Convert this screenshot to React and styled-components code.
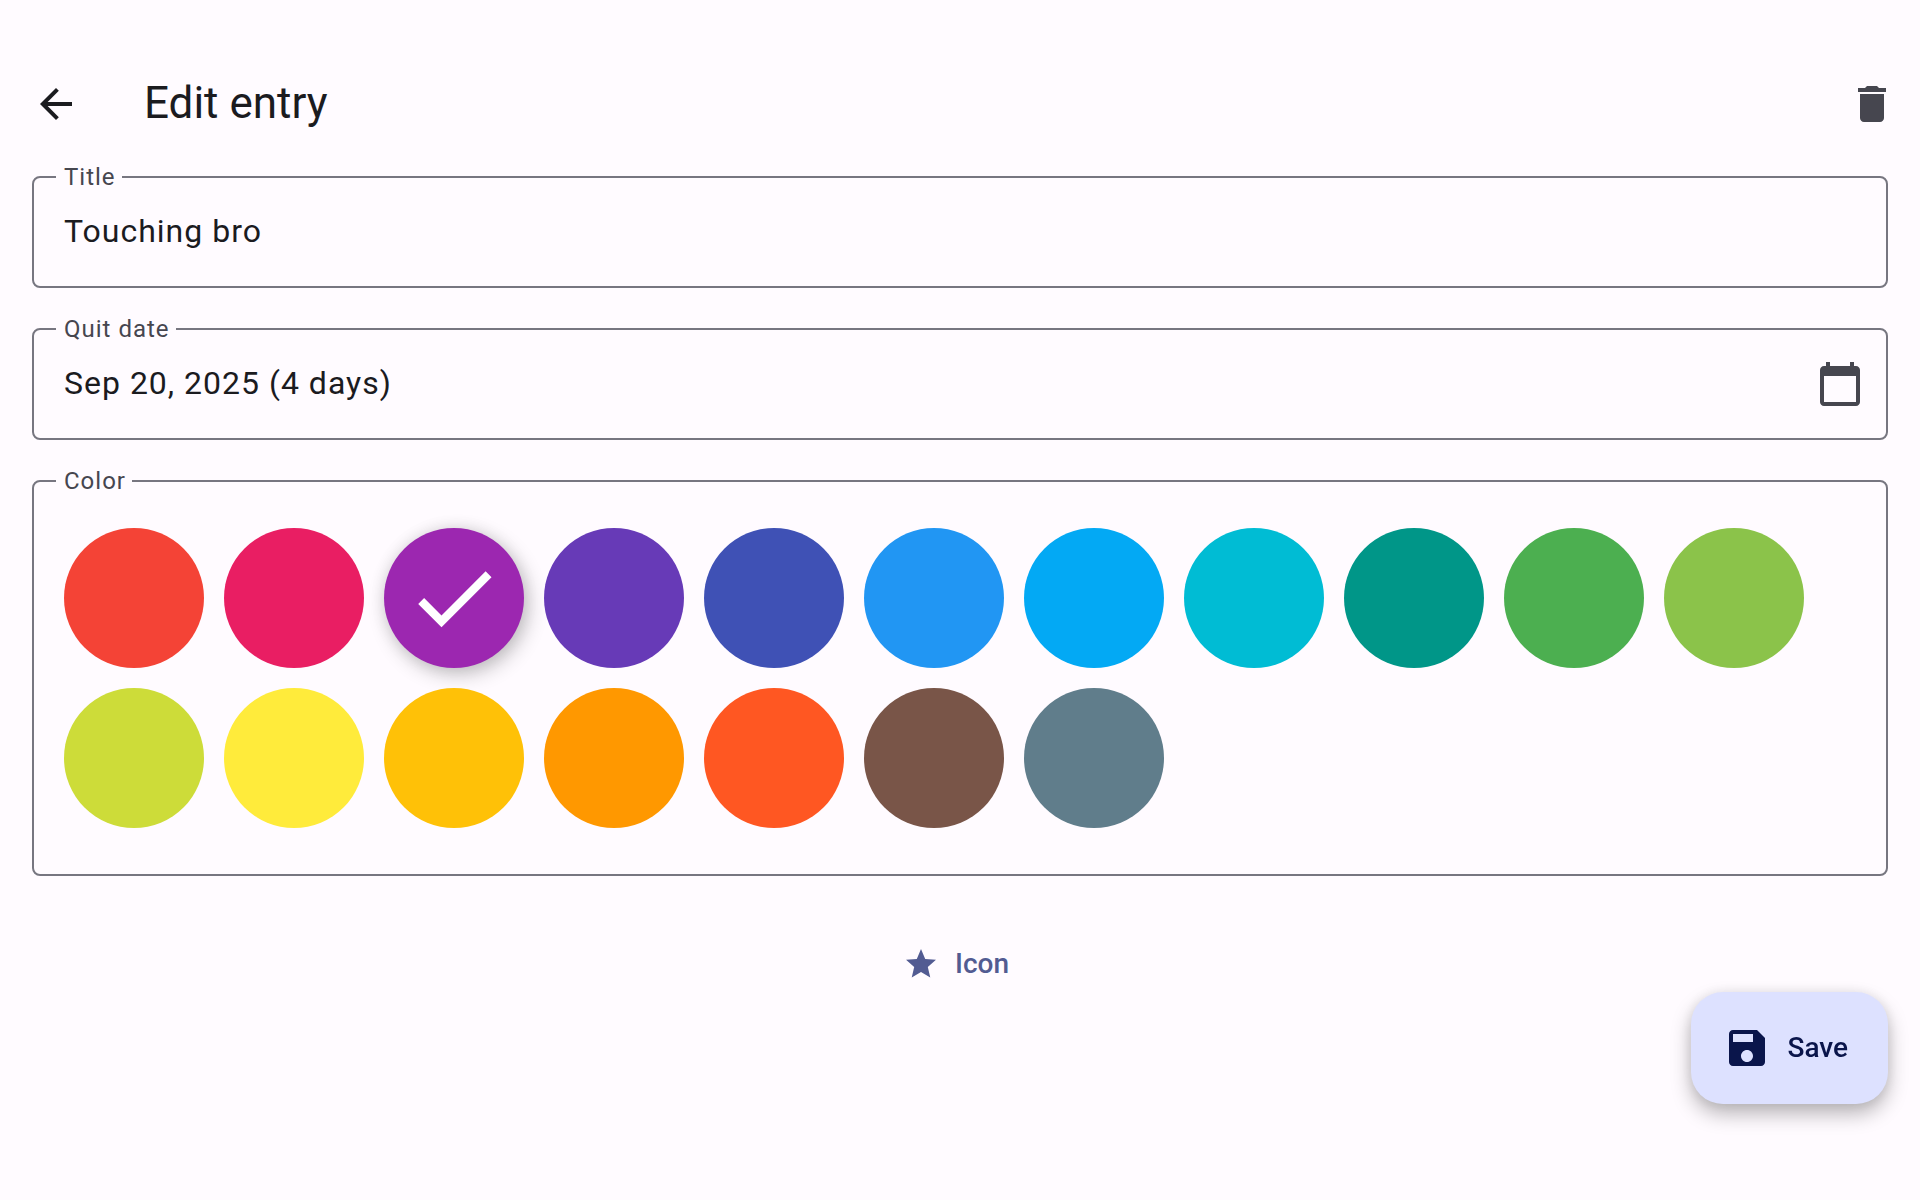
import React, { useState } from "react";
import styled, { createGlobalStyle } from "styled-components";

const theme = {
  background: "#fffbff",
  text: "#1b1b1f",
  muted: "#46464f",
  outline: "#777680",
  primary: "#525b92",
  container: "#dde1ff",
  onContainer: "#0a154b",
};

const GlobalStyle = createGlobalStyle`
  *, *::before, *::after { box-sizing: border-box; }
  body {
    margin: 0;
    background: ${theme.background};
    color: ${theme.text};
    font-family: Roboto, "Liberation Sans", sans-serif;
  }
  button, input { font: inherit; letter-spacing: inherit; }
`;

const Page = styled.div`
  min-height: 100vh;
  padding-top: 40px;
`;

const AppBar = styled.header`
  display: flex;
  align-items: center;
  gap: 40px;
  height: 128px;
  padding-left: 8px;
`;

const IconButton = styled.button`
  display: grid;
  place-items: center;
  flex: none;
  width: ${(p) => p.$size}px;
  height: ${(p) => p.$size}px;
  padding: 0;
  border: 0;
  border-radius: 50%;
  background: transparent;
  color: ${(p) => p.$color};
  cursor: pointer;
`;

const Heading = styled.h1`
  flex: 1;
  margin: 0;
  padding-bottom: 2px;
  font-size: 44px;
  line-height: 56px;
  font-weight: 400;
`;

const Form = styled.form`
  display: flex;
  flex-direction: column;
  gap: 40px;
  padding: 8px 32px 0;
`;

const Outline = styled.div`
  position: relative;
  display: flex;
  align-items: center;
  min-width: 0;
  margin: 0;
  padding: 0 22px 0 30px;
  border: 2px solid ${theme.outline};
  border-radius: 8px;
`;

const FieldLabel = styled.label`
  position: absolute;
  top: -17px;
  left: 22px;
  padding: 0 6px 0 8px;
  background: ${theme.background};
  color: ${theme.muted};
  font-size: 24px;
  line-height: 32px;
  letter-spacing: 1px;
`;

const TextInput = styled.input`
  flex: 1;
  min-width: 0;
  height: 108px;
  padding: 0 0 2px;
  border: 0;
  outline: 0;
  background: transparent;
  color: ${theme.text};
  font-size: 32px;
  line-height: 48px;
  letter-spacing: 1px;
`;

const Swatches = styled.div`
  display: flex;
  flex-wrap: wrap;
  gap: 20px;
  padding: 46px 8px 46px 0;
`;

const Swatch = styled.label`
  display: grid;
  place-items: center;
  width: 140px;
  height: 140px;
  color: #fff;
  cursor: pointer;

  > * { grid-area: 1 / 1; }
  > svg { z-index: 1; pointer-events: none; }
`;

const SwatchInput = styled.input`
  appearance: none;
  width: 100%;
  height: 100%;
  margin: 0;
  border-radius: 50%;
  background: ${(p) => p.$color};
  cursor: pointer;

  &:checked { box-shadow: 4px 6px 20px rgba(0, 0, 0, 0.24), 0 0 16px rgba(0, 0, 0, 0.08); }
`;

const TextButton = styled.button`
  display: inline-flex;
  align-items: center;
  align-self: center;
  gap: 16px;
  height: 80px;
  margin-top: 8px;
  padding: 0 32px 0 24px;
  border: 0;
  border-radius: 40px;
  background: transparent;
  color: ${theme.primary};
  font-size: 28px;
  line-height: 40px;
  font-weight: 500;
  cursor: pointer;
`;

const SaveButton = styled.button`
  position: fixed;
  right: 32px;
  bottom: 96px;
  display: inline-flex;
  align-items: center;
  gap: 16px;
  height: 112px;
  padding: 0 40px 0 32px;
  border: 0;
  border-radius: 32px;
  background: ${theme.container};
  color: ${theme.onContainer};
  font-size: 28px;
  line-height: 40px;
  font-weight: 500;
  box-shadow: 0 10px 20px rgba(0, 0, 0, 0.28), 0 0 14px rgba(0, 0, 0, 0.08);
  cursor: pointer;
`;

const paths = {
  back: "M20 11H7.83l5.59-5.59L12 4l-8 8 8 8 1.41-1.41L7.83 13H20v-2z",
  trash: "M6 19c0 1.1.9 2 2 2h8c1.1 0 2-.9 2-2V7H6v12zM19 4h-3.5l-1-1h-5l-1 1H5v2h14V4z",
  calendar:
    "M20 3h-1V1h-2v2H7V1H5v2H4c-1.1 0-2 .9-2 2v16c0 1.1.9 2 2 2h16c1.1 0 2-.9 2-2V5c0-1.1-.9-2-2-2zm0 18H4V8h16v13z",
  check: "M9 16.17L4.83 12l-1.42 1.41L9 19 21 7l-1.41-1.41z",
  star: "M12 17.27L18.18 21l-1.64-7.03L22 9.24l-7.19-.61L12 2 9.19 8.63 2 9.24l5.46 4.73L5.82 21z",
  save: "M17 3H5c-1.11 0-2 .9-2 2v14c0 1.1.89 2 2 2h14c1.1 0 2-.9 2-2V7l-4-4zm-5 16c-1.66 0-3-1.34-3-3s1.34-3 3-3 3 1.34 3 3-1.34 3-3 3zm3-10H5V5h10v4z",
};

function Icon({ name, size = 48 }) {
  return (
    <svg width={size} height={size} viewBox="0 0 24 24" fill="currentColor" aria-hidden="true">
      <path d={paths[name]} />
    </svg>
  );
}

const colors = [
  ["Red", "#f44336"],
  ["Pink", "#e91e63"],
  ["Purple", "#9c27b0"],
  ["Deep purple", "#673ab7"],
  ["Indigo", "#3f51b5"],
  ["Blue", "#2196f3"],
  ["Light blue", "#03a9f4"],
  ["Cyan", "#00bcd4"],
  ["Teal", "#009688"],
  ["Green", "#4caf50"],
  ["Light green", "#8bc34a"],
  ["Lime", "#cddc39"],
  ["Yellow", "#ffeb3b"],
  ["Amber", "#ffc107"],
  ["Orange", "#ff9800"],
  ["Deep orange", "#ff5722"],
  ["Brown", "#795548"],
  ["Blue grey", "#607d8b"],
];

export default function App() {
  const [title, setTitle] = useState("Touching bro");
  const [color, setColor] = useState("#9c27b0");

  return (
    <Page>
      <GlobalStyle />
      <AppBar>
        <IconButton type="button" aria-label="Back" $size={96} $color={theme.text}>
          <Icon name="back" />
        </IconButton>
        <Heading>Edit entry</Heading>
        <IconButton type="button" aria-label="Delete" $size={96} $color={theme.muted}>
          <Icon name="trash" />
        </IconButton>
      </AppBar>
      <Form id="entry" onSubmit={(e) => e.preventDefault()}>
        <Outline>
          <FieldLabel htmlFor="title">Title</FieldLabel>
          <TextInput id="title" value={title} onChange={(e) => setTitle(e.target.value)} />
        </Outline>
        <Outline>
          <FieldLabel htmlFor="date">Quit date</FieldLabel>
          <TextInput id="date" value="Sep 20, 2025 (4 days)" readOnly />
          <IconButton type="button" aria-label="Choose date" $size={48} $color={theme.muted}>
            <Icon name="calendar" />
          </IconButton>
        </Outline>
        <Outline as="fieldset">
          <FieldLabel as="legend">Color</FieldLabel>
          <Swatches>
            {colors.map(([name, value]) => (
              <Swatch key={value}>
                <SwatchInput
                  type="radio"
                  name="color"
                  value={value}
                  aria-label={name}
                  checked={color === value}
                  onChange={() => setColor(value)}
                  $color={value}
                />
                {color === value && <Icon name="check" size={100} />}
              </Swatch>
            ))}
          </Swatches>
        </Outline>
        <TextButton type="button">
          <Icon name="star" size={36} />
          Icon
        </TextButton>
      </Form>
      <SaveButton type="submit" form="entry">
        <Icon name="save" />
        Save
      </SaveButton>
    </Page>
  );
}
